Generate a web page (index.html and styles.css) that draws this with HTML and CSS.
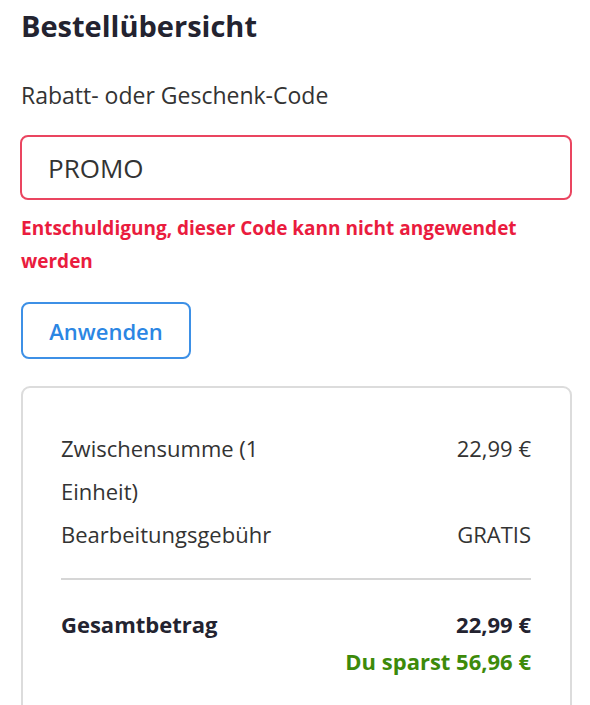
FILE: index.html
```html
<!DOCTYPE html>
<html lang="de">
<head>
    <meta charset="UTF-8">
    <meta name="viewport" content="width=device-width, initial-scale=1.0">
    <title>Bestellübersicht</title>
    <link rel="stylesheet" href="styles.css">
</head>
<body>
    <div class="summary">
        <h2 class="summary-title">Bestellübersicht</h2>
        <label class="promo-label" for="promo">Rabatt- oder Geschenk-Code</label>
        <input type="text" id="promo" class="promo-input" value="PROMO">
        <p class="promo-error">Entschuldigung, dieser Code kann nicht angewendet werden</p>
        <button class="promo-button">Anwenden</button>

        <div class="totals-card">
            <div class="totals-row">
                <span class="totals-label">Zwischensumme (1 Einheit)</span>
                <span class="totals-value">22,99 €</span>
            </div>
            <div class="totals-row">
                <span class="totals-label">Bearbeitungsgebühr</span>
                <span class="totals-value">GRATIS</span>
            </div>
            <hr class="totals-divider">
            <div class="totals-row totals-grand">
                <span class="totals-label">Gesamtbetrag</span>
                <span class="totals-value">22,99 €</span>
            </div>
            <div class="totals-savings">Du sparst 56,96 €</div>
        </div>
    </div>
</body>
</html>
```

FILE: styles.css
```css
body {
    font-family: 'Open Sans', 'Noto Sans', sans-serif;
    background-color: #fff;
    color: #333;
    margin: 0;
    padding: 0;
}
.summary {
    padding: 6px 18px 0 21px;
}
.summary-title {
    font-size: 29px;
    font-weight: 700;
    color: #232330;
    margin: 0 0 35px 0;
    line-height: 40px;
}
.promo-label {
    display: block;
    font-size: 23px;
    line-height: 28px;
    color: #333;
    margin-bottom: 26px;
}
.promo-input {
    display: block;
    box-sizing: border-box;
    width: 552px;
    height: 65px;
    margin-left: -1px;
    padding: 0 26px;
    font-family: inherit;
    font-size: 26px;
    color: #333;
    border: 2px solid #ea4560;
    border-radius: 8px;
    outline: none;
}
.promo-error {
    margin: 12px 0 0 0;
    font-size: 19px;
    font-weight: 700;
    line-height: 33px;
    color: #ea1c3e;
    width: 530px;
}
.promo-button {
    display: block;
    margin-top: 24px;
    width: 170px;
    height: 57px;
    font-family: inherit;
    font-size: 22px;
    font-weight: 600;
    color: #2b86e3;
    background-color: #fff;
    border: 2px solid #3d90e6;
    border-radius: 8px;
    cursor: pointer;
}
.totals-card {
    margin-top: 27px;
    width: 551px;
    box-sizing: border-box;
    padding: 39px 39px 36px 38px;
    border: 2px solid #dcdcdc;
    border-radius: 9px;
}
.totals-row {
    display: flex;
    justify-content: space-between;
    font-size: 22px;
    line-height: 43px;
    color: #333;
}
.totals-label {
    flex: 0 0 50%;
}
.totals-value {
    text-align: right;
}
.totals-divider {
    border: none;
    border-top: 2px solid #d6d6d6;
    margin: 22px 0 23px 0;
}
.totals-grand {
    font-weight: 700;
    color: #232330;
}
.totals-savings {
    text-align: right;
    font-size: 22px;
    font-weight: 700;
    line-height: 30px;
    color: #3d8a0a;
}
```
